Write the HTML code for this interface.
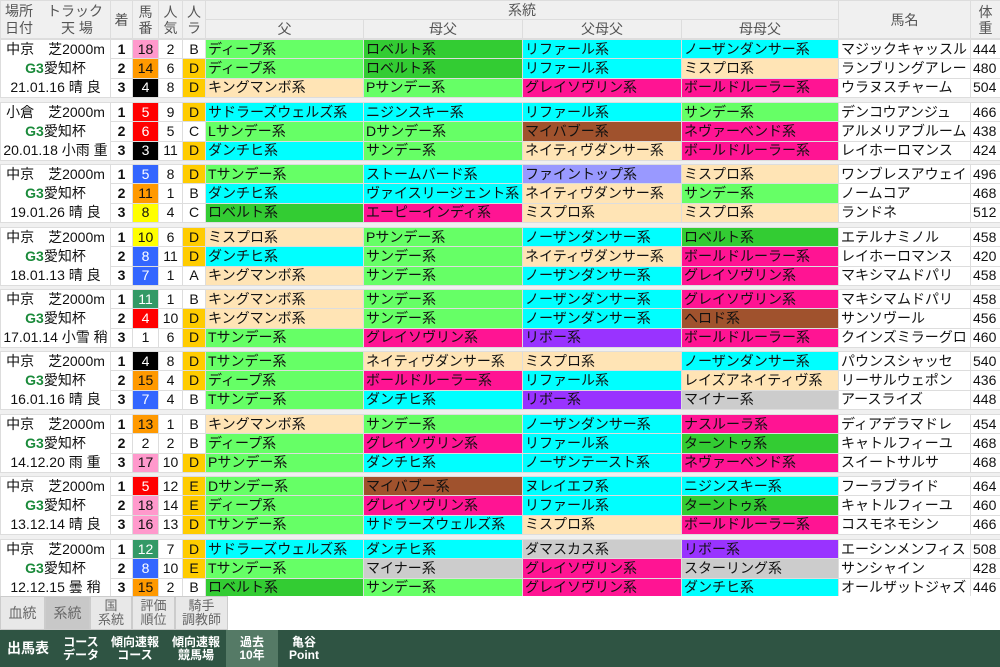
<!DOCTYPE html>
<html><head><meta charset="utf-8"><style>
*{margin:0;padding:0;box-sizing:border-box}
body{width:1000px;height:667px;background:#f0f0f0;font-family:"Liberation Sans","Noto Sans CJK JP",sans-serif;font-size:14px;color:#111;position:relative;overflow:hidden}
table{border-collapse:collapse;table-layout:fixed;position:absolute;left:0;width:1000px}
td{border:1px solid #ddd;height:19px;line-height:17px;white-space:nowrap;overflow:hidden;padding:0 2px;background:#fff}
td.c{text-align:center}
td.p{text-align:center;line-height:19px;font-size:14px;vertical-align:middle;padding:0}
td.k{text-align:center;font-weight:bold}
.g3{color:#1a8a3a;font-weight:bold}
.lg{background:#66ff66}.dg{background:#33cc33}.cy{background:#00ffff}.pe{background:#ffe4b5}.mg{background:#ff1493}.br{background:#a0522d}.pw{background:#9999ff}.pu{background:#9933ff}.gy{background:#cccccc}
.ye{background:#ffcc00}
.n{text-align:center}
.nw{background:#fff}.nk{background:#000;color:#fff}.nr{background:#ff0000;color:#fff}.nb{background:#3366ff;color:#fff}.ny{background:#ffff00}.ng{background:#339966;color:#fff}.no{background:#ff9900}.np{background:#ff99cc}
.hd td{background:#f0f0f0;color:#555;text-align:center;line-height:16px}
.tabs{position:absolute;top:596px;left:0;width:1000px;height:34px;background:#fff}
.tab{position:absolute;top:0;height:34px;background:#e8e8e8;border:1px solid #ccc;color:#666;font-size:13px;line-height:14px;text-align:center;display:flex;align-items:center;justify-content:center}
.bar{position:absolute;top:630px;left:0;width:1000px;height:37px;background:#2f5443;color:#fff;font-weight:bold}
.bi{position:absolute;top:0;height:37px;font-size:12px;line-height:13px;display:flex;align-items:center;justify-content:center;text-align:center}
</style></head><body>
<table class="hd" style="top:0">
<colgroup><col style="width:110px"><col style="width:22px"><col style="width:26px"><col style="width:24px"><col style="width:23px"><col style="width:158px"><col style="width:159px"><col style="width:159px"><col style="width:157px"><col style="width:132px"><col style="width:30px"></colgroup>
<tr><td rowspan="2" style="height:38px;text-align:left;line-height:17px;padding:0 4px;font-size:14px">場所　トラック<br>日付　　天 場</td><td rowspan="2">着</td><td rowspan="2">馬<br>番</td><td rowspan="2">人<br>気</td><td rowspan="2">人<br>ラ</td><td colspan="4">系統</td><td rowspan="2">馬名</td><td rowspan="2">体<br>重</td></tr>
<tr><td>父</td><td>母父</td><td>父母父</td><td>母母父</td></tr>
</table>

<table style="top:39px"><colgroup><col style="width:110px"><col style="width:22px"><col style="width:26px"><col style="width:24px"><col style="width:23px"><col style="width:158px"><col style="width:159px"><col style="width:159px"><col style="width:157px"><col style="width:132px"><col style="width:30px"></colgroup>
<tr><td class="p" rowspan="3">中京　芝2000m<br><span class="g3">G3</span>愛知杯<br>21.01.16 晴 良</td><td class="k">1</td><td class="n np">18</td><td class="c">2</td><td class="c">B</td><td class="lg">ディープ系</td><td class="dg">ロベルト系</td><td class="cy">リファール系</td><td class="cy">ノーザンダンサー系</td><td>マジックキャッスル</td><td>444</td></tr>
<tr><td class="k">2</td><td class="n no">14</td><td class="c">6</td><td class="c ye">D</td><td class="lg">ディープ系</td><td class="dg">ロベルト系</td><td class="cy">リファール系</td><td class="pe">ミスプロ系</td><td>ランブリングアレー</td><td>480</td></tr>
<tr><td class="k">3</td><td class="n nk">4</td><td class="c">8</td><td class="c ye">D</td><td class="pe">キングマンボ系</td><td class="lg">Pサンデー系</td><td class="mg">グレイソヴリン系</td><td class="mg">ボールドルーラー系</td><td>ウラヌスチャーム</td><td>504</td></tr></table>

<table style="top:102px"><colgroup><col style="width:110px"><col style="width:22px"><col style="width:26px"><col style="width:24px"><col style="width:23px"><col style="width:158px"><col style="width:159px"><col style="width:159px"><col style="width:157px"><col style="width:132px"><col style="width:30px"></colgroup>
<tr><td class="p" rowspan="3">小倉　芝2000m<br><span class="g3">G3</span>愛知杯<br>20.01.18 小雨 重</td><td class="k">1</td><td class="n nr">5</td><td class="c">9</td><td class="c ye">D</td><td class="cy">サドラーズウェルズ系</td><td class="cy">ニジンスキー系</td><td class="cy">リファール系</td><td class="lg">サンデー系</td><td>デンコウアンジュ</td><td>466</td></tr>
<tr><td class="k">2</td><td class="n nr">6</td><td class="c">5</td><td class="c">C</td><td class="lg">Lサンデー系</td><td class="lg">Dサンデー系</td><td class="br">マイバブー系</td><td class="mg">ネヴァーベンド系</td><td>アルメリアブルーム</td><td>438</td></tr>
<tr><td class="k">3</td><td class="n nk">3</td><td class="c">11</td><td class="c ye">D</td><td class="cy">ダンチヒ系</td><td class="lg">サンデー系</td><td class="pe">ネイティヴダンサー系</td><td class="mg">ボールドルーラー系</td><td>レイホーロマンス</td><td>424</td></tr></table>

<table style="top:164px"><colgroup><col style="width:110px"><col style="width:22px"><col style="width:26px"><col style="width:24px"><col style="width:23px"><col style="width:158px"><col style="width:159px"><col style="width:159px"><col style="width:157px"><col style="width:132px"><col style="width:30px"></colgroup>
<tr><td class="p" rowspan="3">中京　芝2000m<br><span class="g3">G3</span>愛知杯<br>19.01.26 晴 良</td><td class="k">1</td><td class="n nb">5</td><td class="c">8</td><td class="c ye">D</td><td class="lg">Tサンデー系</td><td class="cy">ストームバード系</td><td class="pw">ファイントップ系</td><td class="pe">ミスプロ系</td><td>ワンブレスアウェイ</td><td>496</td></tr>
<tr><td class="k">2</td><td class="n no">11</td><td class="c">1</td><td class="c">B</td><td class="cy">ダンチヒ系</td><td class="cy">ヴァイスリージェント系</td><td class="pe">ネイティヴダンサー系</td><td class="lg">サンデー系</td><td>ノームコア</td><td>468</td></tr>
<tr><td class="k">3</td><td class="n ny">8</td><td class="c">4</td><td class="c">C</td><td class="dg">ロベルト系</td><td class="mg">エーピーインディ系</td><td class="pe">ミスプロ系</td><td class="pe">ミスプロ系</td><td>ランドネ</td><td>512</td></tr></table>

<table style="top:227px"><colgroup><col style="width:110px"><col style="width:22px"><col style="width:26px"><col style="width:24px"><col style="width:23px"><col style="width:158px"><col style="width:159px"><col style="width:159px"><col style="width:157px"><col style="width:132px"><col style="width:30px"></colgroup>
<tr><td class="p" rowspan="3">中京　芝2000m<br><span class="g3">G3</span>愛知杯<br>18.01.13 晴 良</td><td class="k">1</td><td class="n ny">10</td><td class="c">6</td><td class="c ye">D</td><td class="pe">ミスプロ系</td><td class="lg">Pサンデー系</td><td class="cy">ノーザンダンサー系</td><td class="dg">ロベルト系</td><td>エテルナミノル</td><td>458</td></tr>
<tr><td class="k">2</td><td class="n nb">8</td><td class="c">11</td><td class="c ye">D</td><td class="cy">ダンチヒ系</td><td class="lg">サンデー系</td><td class="pe">ネイティヴダンサー系</td><td class="mg">ボールドルーラー系</td><td>レイホーロマンス</td><td>420</td></tr>
<tr><td class="k">3</td><td class="n nb">7</td><td class="c">1</td><td class="c">A</td><td class="pe">キングマンボ系</td><td class="lg">サンデー系</td><td class="cy">ノーザンダンサー系</td><td class="mg">グレイソヴリン系</td><td>マキシマムドパリ</td><td>458</td></tr></table>

<table style="top:289px"><colgroup><col style="width:110px"><col style="width:22px"><col style="width:26px"><col style="width:24px"><col style="width:23px"><col style="width:158px"><col style="width:159px"><col style="width:159px"><col style="width:157px"><col style="width:132px"><col style="width:30px"></colgroup>
<tr><td class="p" rowspan="3">中京　芝2000m<br><span class="g3">G3</span>愛知杯<br>17.01.14 小雪 稍</td><td class="k">1</td><td class="n ng">11</td><td class="c">1</td><td class="c">B</td><td class="pe">キングマンボ系</td><td class="lg">サンデー系</td><td class="cy">ノーザンダンサー系</td><td class="mg">グレイソヴリン系</td><td>マキシマムドパリ</td><td>458</td></tr>
<tr><td class="k">2</td><td class="n nr">4</td><td class="c">10</td><td class="c ye">D</td><td class="pe">キングマンボ系</td><td class="lg">サンデー系</td><td class="cy">ノーザンダンサー系</td><td class="br">ヘロド系</td><td>サンソヴール</td><td>456</td></tr>
<tr><td class="k">3</td><td class="n nw">1</td><td class="c">6</td><td class="c ye">D</td><td class="lg">Tサンデー系</td><td class="mg">グレイソヴリン系</td><td class="pu">リボー系</td><td class="mg">ボールドルーラー系</td><td>クインズミラーグロ</td><td>460</td></tr></table>

<table style="top:351px"><colgroup><col style="width:110px"><col style="width:22px"><col style="width:26px"><col style="width:24px"><col style="width:23px"><col style="width:158px"><col style="width:159px"><col style="width:159px"><col style="width:157px"><col style="width:132px"><col style="width:30px"></colgroup>
<tr><td class="p" rowspan="3">中京　芝2000m<br><span class="g3">G3</span>愛知杯<br>16.01.16 晴 良</td><td class="k">1</td><td class="n nk">4</td><td class="c">8</td><td class="c ye">D</td><td class="lg">Tサンデー系</td><td class="pe">ネイティヴダンサー系</td><td class="pe">ミスプロ系</td><td class="cy">ノーザンダンサー系</td><td>パウンスシャッセ</td><td>540</td></tr>
<tr><td class="k">2</td><td class="n no">15</td><td class="c">4</td><td class="c ye">D</td><td class="lg">ディープ系</td><td class="mg">ボールドルーラー系</td><td class="cy">リファール系</td><td class="pe">レイズアネイティヴ系</td><td>リーサルウェポン</td><td>436</td></tr>
<tr><td class="k">3</td><td class="n nb">7</td><td class="c">4</td><td class="c">B</td><td class="lg">Tサンデー系</td><td class="cy">ダンチヒ系</td><td class="pu">リボー系</td><td class="gy">マイナー系</td><td>アースライズ</td><td>448</td></tr></table>

<table style="top:414px"><colgroup><col style="width:110px"><col style="width:22px"><col style="width:26px"><col style="width:24px"><col style="width:23px"><col style="width:158px"><col style="width:159px"><col style="width:159px"><col style="width:157px"><col style="width:132px"><col style="width:30px"></colgroup>
<tr><td class="p" rowspan="3">中京　芝2000m<br><span class="g3">G3</span>愛知杯<br>14.12.20 雨 重</td><td class="k">1</td><td class="n no">13</td><td class="c">1</td><td class="c">B</td><td class="pe">キングマンボ系</td><td class="lg">サンデー系</td><td class="cy">ノーザンダンサー系</td><td class="mg">ナスルーラ系</td><td>ディアデラマドレ</td><td>454</td></tr>
<tr><td class="k">2</td><td class="n nw">2</td><td class="c">2</td><td class="c">B</td><td class="lg">ディープ系</td><td class="mg">グレイソヴリン系</td><td class="cy">リファール系</td><td class="dg">ターントゥ系</td><td>キャトルフィーユ</td><td>468</td></tr>
<tr><td class="k">3</td><td class="n np">17</td><td class="c">10</td><td class="c ye">D</td><td class="lg">Pサンデー系</td><td class="cy">ダンチヒ系</td><td class="cy">ノーザンテースト系</td><td class="mg">ネヴァーベンド系</td><td>スイートサルサ</td><td>468</td></tr></table>

<table style="top:476px"><colgroup><col style="width:110px"><col style="width:22px"><col style="width:26px"><col style="width:24px"><col style="width:23px"><col style="width:158px"><col style="width:159px"><col style="width:159px"><col style="width:157px"><col style="width:132px"><col style="width:30px"></colgroup>
<tr><td class="p" rowspan="3">中京　芝2000m<br><span class="g3">G3</span>愛知杯<br>13.12.14 晴 良</td><td class="k">1</td><td class="n nr">5</td><td class="c">12</td><td class="c ye">E</td><td class="lg">Dサンデー系</td><td class="br">マイバブー系</td><td class="cy">ヌレイエフ系</td><td class="cy">ニジンスキー系</td><td>フーラブライド</td><td>464</td></tr>
<tr><td class="k">2</td><td class="n np">18</td><td class="c">14</td><td class="c ye">E</td><td class="lg">ディープ系</td><td class="mg">グレイソヴリン系</td><td class="cy">リファール系</td><td class="dg">ターントゥ系</td><td>キャトルフィーユ</td><td>460</td></tr>
<tr><td class="k">3</td><td class="n np">16</td><td class="c">13</td><td class="c ye">D</td><td class="lg">Tサンデー系</td><td class="cy">サドラーズウェルズ系</td><td class="pe">ミスプロ系</td><td class="mg">ボールドルーラー系</td><td>コスモネモシン</td><td>466</td></tr></table>

<table style="top:539px"><colgroup><col style="width:110px"><col style="width:22px"><col style="width:26px"><col style="width:24px"><col style="width:23px"><col style="width:158px"><col style="width:159px"><col style="width:159px"><col style="width:157px"><col style="width:132px"><col style="width:30px"></colgroup>
<tr><td class="p" rowspan="3">中京　芝2000m<br><span class="g3">G3</span>愛知杯<br>12.12.15 曇 稍</td><td class="k">1</td><td class="n ng">12</td><td class="c">7</td><td class="c ye">D</td><td class="cy">サドラーズウェルズ系</td><td class="cy">ダンチヒ系</td><td class="gy">ダマスカス系</td><td class="pu">リボー系</td><td>エーシンメンフィス</td><td>508</td></tr>
<tr><td class="k">2</td><td class="n nb">8</td><td class="c">10</td><td class="c ye">E</td><td class="lg">Tサンデー系</td><td class="gy">マイナー系</td><td class="mg">グレイソヴリン系</td><td class="gy">スターリング系</td><td>サンシャイン</td><td>428</td></tr>
<tr><td class="k">3</td><td class="n no">15</td><td class="c">2</td><td class="c">B</td><td class="dg">ロベルト系</td><td class="lg">サンデー系</td><td class="mg">グレイソヴリン系</td><td class="cy">ダンチヒ系</td><td>オールザットジャズ</td><td>446</td></tr></table>

<div class="tabs">
<div class="tab" style="left:0;width:45px;font-size:14px">血統</div>
<div class="tab" style="left:45px;width:45px;background:#c8c8c8;font-size:14px">系統</div>
<div class="tab" style="left:90px;width:42px">国<br>系統</div>
<div class="tab" style="left:132px;width:43px">評価<br>順位</div>
<div class="tab" style="left:175px;width:53px">騎手<br>調教師</div>
</div>
<div class="bar">
<div class="bi" style="left:4px;width:48px;font-size:14px">出馬表</div>
<div class="bi" style="left:60px;width:42px">コース<br>データ</div>
<div class="bi" style="left:108px;width:54px">傾向速報<br>コース</div>
<div class="bi" style="left:168px;width:56px">傾向速報<br>競馬場</div>
<div class="bi" style="left:226px;width:52px;background:#557a66">過去<br>10年</div>
<div class="bi" style="left:282px;width:44px">亀谷<br>Point</div>
</div>
</body></html>
